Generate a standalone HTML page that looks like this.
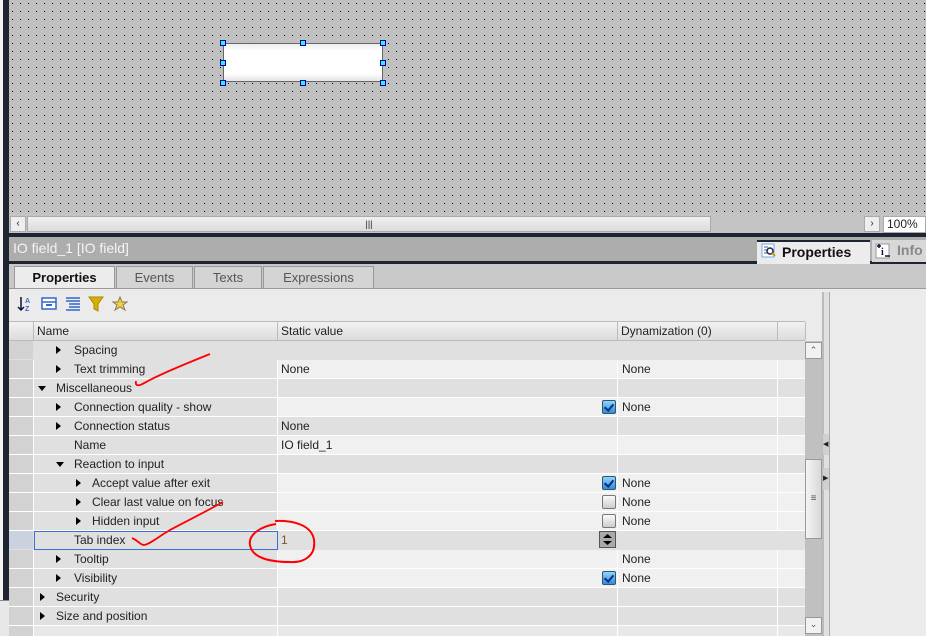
<!DOCTYPE html>
<html style="overflow:hidden;width:926px;height:636px"><head><style>
*{margin:0;padding:0;box-sizing:border-box}
body{width:926px;height:636px;overflow:hidden;position:relative;background:#c8c8c8;font-family:"Liberation Sans","DejaVu Sans",sans-serif;font-size:12px;color:#222}
.a{position:absolute}
.row{position:absolute;left:9px;width:796px;height:19px}
.row div{position:absolute;top:0;height:18px;line-height:18px}
.tri{position:absolute;width:0;height:0;border-top:4px solid transparent;border-bottom:4px solid transparent;border-left:5px solid #000;top:5px}
.trid{position:absolute;width:0;height:0;border-left:4px solid transparent;border-right:4px solid transparent;border-top:5px solid #000;top:7px}
.cb{position:absolute;left:593px;top:2px;width:14px;height:14px;border:1px solid #777;border-radius:2px;background:linear-gradient(#fafafa,#ccc)}
.cb.on{background:linear-gradient(#8fd4ff,#2a8ee0);border-color:#356}
.cb.on::after{content:"";position:absolute;left:3px;top:1px;width:4px;height:7px;border-right:2px solid #0a2a7a;border-bottom:2px solid #0a2a7a;transform:rotate(40deg)}
.tab{position:absolute;top:266px;height:22px;border:1px solid #999;border-bottom:none;background:#d4d4d4;color:#555;font-size:13px;text-align:center;line-height:21px}
</style></head><body>
<div class="a" style="left:0;top:0;width:3px;height:636px;background:#f4f4f4"></div>
<div class="a" style="left:3px;top:0;width:6px;height:600px;background:#1f2433"></div>
<svg class="a" style="left:9px;top:0" width="917" height="212"><defs><pattern id="d" x="3" y="3" width="8" height="8" patternUnits="userSpaceOnUse"><rect width="8" height="8" fill="#c0c0c0"/><rect x="0" y="0" width="1" height="1" fill="#000"/></pattern></defs><rect width="917" height="212" fill="url(#d)"/></svg>
<!-- selected IO field -->
<div class="a" style="left:223px;top:43px;width:160px;height:39px;border:1px solid #666;background:linear-gradient(#eee,#fff 20%,#fff 80%,#e4e4e4)"></div>
<div class="a" style="left:220px;top:40px;width:6px;height:6px;background:#3ee;border:1px solid #00a"></div>
<div class="a" style="left:300px;top:40px;width:6px;height:6px;background:#3ee;border:1px solid #00a"></div>
<div class="a" style="left:380px;top:40px;width:6px;height:6px;background:#3ee;border:1px solid #00a"></div>
<div class="a" style="left:220px;top:60px;width:6px;height:6px;background:#3ee;border:1px solid #00a"></div>
<div class="a" style="left:380px;top:60px;width:6px;height:6px;background:#3ee;border:1px solid #00a"></div>
<div class="a" style="left:220px;top:80px;width:6px;height:6px;background:#3ee;border:1px solid #00a"></div>
<div class="a" style="left:300px;top:80px;width:6px;height:6px;background:#3ee;border:1px solid #00a"></div>
<div class="a" style="left:380px;top:80px;width:6px;height:6px;background:#3ee;border:1px solid #00a"></div>
<!-- h scrollbar -->
<div class="a" style="left:9px;top:212px;width:917px;height:22px;background:#c4c4c4"></div>
<div class="a" style="left:10px;top:216px;width:16px;height:16px;border:1px solid #aaa;background:#eee;font-size:10px;line-height:14px;text-align:center">&#8249;</div>
<div class="a" style="left:27px;top:216px;width:684px;height:16px;border:1px solid #aaa;background:linear-gradient(#f0f0f0,#dcdcdc);text-align:center;font-size:9px;line-height:14px">|||</div>
<div class="a" style="left:864px;top:216px;width:16px;height:16px;border:1px solid #aaa;background:#eee;font-size:10px;line-height:14px;text-align:center">&#8250;</div>
<div class="a" style="left:883px;top:216px;width:43px;height:17px;border:1px solid #aaa;background:#fff;font-size:12px;line-height:15px;padding-left:3px">100%</div>
<div class="a" style="left:9px;top:233px;width:917px;height:4px;background:#1f2433"></div>
<!-- title bar -->
<div class="a" style="left:9px;top:237px;width:917px;height:24px;background:#adadad;color:#f4f4f4;font-size:14px;line-height:22px;padding-left:4px">IO field_1 [IO field]</div>
<div class="a" style="left:9px;top:261px;width:917px;height:3px;background:#1f2433"></div>
<div class="a" style="left:757px;top:240px;width:113px;height:24px;background:#ececec;border-top:2px solid #1f2433;font-size:14px;font-weight:bold;line-height:20px;padding-left:25px;color:#111">Properties</div>
<svg class="a" style="left:760px;top:242px" width="18" height="18"><rect x="2" y="2" width="12" height="13" fill="#fff" stroke="#7ad"/><path d="M4 5h4M4 8h3M4 11h3" stroke="#36a"/><circle cx="10" cy="9" r="3" fill="#fff" stroke="#225" stroke-width="1.5"/><path d="M12 11l3 3" stroke="#c90" stroke-width="2"/></svg>
<div class="a" style="left:872px;top:240px;width:54px;height:22px;background:#d8d8d8;font-size:14px;font-weight:bold;line-height:20px;padding-left:25px;color:#888">Info</div>
<svg class="a" style="left:874px;top:242px" width="18" height="18"><rect x="2" y="2" width="13" height="14" fill="#fff" stroke="#999"/><path d="M3 4h4M5 2v4" stroke="#113" stroke-width="1.5"/><text x="7" y="13" font-size="10" font-weight="bold" fill="#113" font-family="Liberation Serif">i</text><path d="M11 14h5" stroke="#113" stroke-width="1.5"/></svg>
<!-- tabs -->
<div class="tab" style="left:14px;width:101px;background:#ececec;color:#111;font-weight:bold;height:23px">Properties</div>
<div class="tab" style="left:116px;width:77px">Events</div>
<div class="tab" style="left:194px;width:68px">Texts</div>
<div class="tab" style="left:263px;width:111px">Expressions</div>
<div class="a" style="left:9px;top:288px;width:917px;height:348px;background:#ebebeb;border-top:1px solid #999"></div>
<!-- toolbar icons -->
<svg class="a" style="left:17px;top:295px" width="120" height="18">
<path d="M4 2v13M1 12l3 3 3-3" stroke="#113" stroke-width="1.5" fill="none"/><text x="8" y="8" font-size="7" fill="#46c" font-weight="bold">A</text><text x="8" y="16" font-size="7" fill="#46c" font-weight="bold">Z</text>
<rect x="25" y="3" width="14" height="11" fill="#fff" stroke="#36c" stroke-width="1.5"/><path d="M25 7h14" stroke="#36c" stroke-width="1.5"/><rect x="29" y="9" width="6" height="2" fill="#36c"/>
<path d="M49 3h14M49 6h14M52 9h11M52 12h11M49 15h14" stroke="#36c" stroke-width="1.6"/>
<path d="M72 2h14l-5 7v7l-4-2v-5z" fill="#d9b000" stroke="#a80"/>
<path d="M103 2l2 5h5l-4 3 2 5-5-3-5 3 2-5-4-3h5z" fill="#f0d040" stroke="#875"/>
</svg>
<!-- table header -->
<div class="a" style="left:9px;top:321px;width:796px;height:20px;background:linear-gradient(#f2f2f2,#dcdcdc);border-top:1px solid #bbb;border-bottom:1px solid #bbb"></div>
<div class="a" style="left:33px;top:322px;width:244px;height:18px;border-left:1px solid #bbb;line-height:18px;padding-left:3px">Name</div>
<div class="a" style="left:277px;top:322px;width:340px;height:18px;border-left:1px solid #bbb;line-height:18px;padding-left:3px">Static value</div>
<div class="a" style="left:617px;top:322px;width:160px;height:18px;border-left:1px solid #bbb;line-height:18px;padding-left:3px">Dynamization (0)</div>
<div class="a" style="left:777px;top:322px;width:28px;height:18px;border-left:1px solid #bbb"></div>
<div class="a" style="left:805px;top:322px;width:17px;height:18px;border-left:1px solid #bbb"></div>
<!-- rows -->
<div class="a" style="left:9px;top:341px;width:796px;height:295px;background:#fff"></div>
<div class="row" style="top:341px;background:#e0e0e0"><div style="left:0;width:24px;background:#d2d2d2"></div><div style="left:25px;width:243px;background:#e0e0e0"><span class="tri" style="left:22px"></span><span style="position:absolute;left:40px">Spacing</span></div><div style="left:269px;width:339px;background:#e0e0e0"></div><div style="left:609px;width:159px;background:#e0e0e0"></div><div style="left:769px;width:27px;background:#e0e0e0"></div></div>
<div class="row" style="top:360px"><div style="left:0;width:24px;background:#d2d2d2"></div><div style="left:25px;width:243px;background:#e0e0e0"><span class="tri" style="left:22px"></span><span style="position:absolute;left:40px">Text trimming</span></div><div style="left:269px;width:339px;background:#f0f0f0;padding-left:3px">None</div><div style="left:609px;width:159px;background:#f0f0f0;padding-left:4px">None</div><div style="left:769px;width:27px;background:#f0f0f0"></div></div>
<div class="row" style="top:379px"><div style="left:0;width:24px;background:#d2d2d2"></div><div style="left:25px;width:243px;background:#e0e0e0"><span class="trid" style="left:4px"></span><span style="position:absolute;left:22px">Miscellaneous</span></div><div style="left:269px;width:339px;background:#e0e0e0"></div><div style="left:609px;width:159px;background:#e0e0e0"></div><div style="left:769px;width:27px;background:#e0e0e0"></div></div>
<div class="row" style="top:398px"><div style="left:0;width:24px;background:#d2d2d2"></div><div style="left:25px;width:243px;background:#e0e0e0"><span class="tri" style="left:22px"></span><span style="position:absolute;left:40px">Connection quality - show</span></div><div style="left:269px;width:339px;background:#f0f0f0"><span class="cb on" style="left:324px"></span></div><div style="left:609px;width:159px;background:#f0f0f0;padding-left:4px">None</div><div style="left:769px;width:27px;background:#f0f0f0"></div></div>
<div class="row" style="top:417px"><div style="left:0;width:24px;background:#d2d2d2"></div><div style="left:25px;width:243px;background:#e0e0e0"><span class="tri" style="left:22px"></span><span style="position:absolute;left:40px">Connection status</span></div><div style="left:269px;width:339px;background:#e0e0e0;padding-left:3px">None</div><div style="left:609px;width:159px;background:#e0e0e0"></div><div style="left:769px;width:27px;background:#e0e0e0"></div></div>
<div class="row" style="top:436px"><div style="left:0;width:24px;background:#d2d2d2"></div><div style="left:25px;width:243px;background:#e0e0e0"><span style="position:absolute;left:40px">Name</span></div><div style="left:269px;width:339px;background:#f0f0f0;padding-left:3px">IO field_1</div><div style="left:609px;width:159px;background:#f0f0f0"></div><div style="left:769px;width:27px;background:#f0f0f0"></div></div>
<div class="row" style="top:455px"><div style="left:0;width:24px;background:#d2d2d2"></div><div style="left:25px;width:243px;background:#e0e0e0"><span class="trid" style="left:22px"></span><span style="position:absolute;left:40px">Reaction to input</span></div><div style="left:269px;width:339px;background:#e0e0e0"></div><div style="left:609px;width:159px;background:#e0e0e0"></div><div style="left:769px;width:27px;background:#e0e0e0"></div></div>
<div class="row" style="top:474px"><div style="left:0;width:24px;background:#d2d2d2"></div><div style="left:25px;width:243px;background:#e0e0e0"><span class="tri" style="left:42px"></span><span style="position:absolute;left:58px">Accept value after exit</span></div><div style="left:269px;width:339px;background:#f0f0f0"><span class="cb on" style="left:324px"></span></div><div style="left:609px;width:159px;background:#f0f0f0;padding-left:4px">None</div><div style="left:769px;width:27px;background:#f0f0f0"></div></div>
<div class="row" style="top:493px"><div style="left:0;width:24px;background:#d2d2d2"></div><div style="left:25px;width:243px;background:#e0e0e0"><span class="tri" style="left:42px"></span><span style="position:absolute;left:58px">Clear last value on focus</span></div><div style="left:269px;width:339px;background:#f0f0f0"><span class="cb" style="left:324px"></span></div><div style="left:609px;width:159px;background:#f0f0f0;padding-left:4px">None</div><div style="left:769px;width:27px;background:#f0f0f0"></div></div>
<div class="row" style="top:512px"><div style="left:0;width:24px;background:#d2d2d2"></div><div style="left:25px;width:243px;background:#e0e0e0"><span class="tri" style="left:42px"></span><span style="position:absolute;left:58px">Hidden input</span></div><div style="left:269px;width:339px;background:#f0f0f0"><span class="cb" style="left:324px"></span></div><div style="left:609px;width:159px;background:#f0f0f0;padding-left:4px">None</div><div style="left:769px;width:27px;background:#f0f0f0"></div></div>
<div class="row" style="top:531px;background:#e0e0e0"><div style="left:0;width:24px;background:#c9d2de"></div><div style="left:25px;width:244px;background:#e0e0e0;border:1px solid #3a6fd8;height:19px"><span style="position:absolute;left:39px;top:-1px">Tab index</span></div><div style="left:269px;width:339px;background:#e0e0e0;padding-left:3px;color:#753">1</div><div style="left:609px;width:159px;background:#e0e0e0"></div><div style="left:769px;width:27px;background:#e0e0e0"></div></div>
<svg class="a" style="left:599px;top:531px" width="17" height="17"><rect x="0.5" y="0.5" width="16" height="16" fill="#aaa" stroke="#555"/><path d="M4 7l4.5-4 4.5 4zM4 10l4.5 4 4.5-4z" fill="#000"/></svg>
<div class="row" style="top:550px"><div style="left:0;width:24px;background:#d2d2d2"></div><div style="left:25px;width:243px;background:#e0e0e0"><span class="tri" style="left:22px"></span><span style="position:absolute;left:40px">Tooltip</span></div><div style="left:269px;width:339px;background:#f0f0f0"></div><div style="left:609px;width:159px;background:#f0f0f0;padding-left:4px">None</div><div style="left:769px;width:27px;background:#f0f0f0"></div></div>
<div class="row" style="top:569px"><div style="left:0;width:24px;background:#d2d2d2"></div><div style="left:25px;width:243px;background:#e0e0e0"><span class="tri" style="left:22px"></span><span style="position:absolute;left:40px">Visibility</span></div><div style="left:269px;width:339px;background:#f0f0f0"><span class="cb on" style="left:324px"></span></div><div style="left:609px;width:159px;background:#f0f0f0;padding-left:4px">None</div><div style="left:769px;width:27px;background:#f0f0f0"></div></div>
<div class="row" style="top:588px"><div style="left:0;width:24px;background:#d2d2d2"></div><div style="left:25px;width:243px;background:#e0e0e0"><span class="tri" style="left:6px"></span><span style="position:absolute;left:22px">Security</span></div><div style="left:269px;width:339px;background:#e0e0e0"></div><div style="left:609px;width:159px;background:#e0e0e0"></div><div style="left:769px;width:27px;background:#e0e0e0"></div></div>
<div class="row" style="top:607px"><div style="left:0;width:24px;background:#d2d2d2"></div><div style="left:25px;width:243px;background:#e0e0e0"><span class="tri" style="left:6px"></span><span style="position:absolute;left:22px">Size and position</span></div><div style="left:269px;width:339px;background:#e0e0e0"></div><div style="left:609px;width:159px;background:#e0e0e0"></div><div style="left:769px;width:27px;background:#e0e0e0"></div></div>
<div class="row" style="top:626px;height:10px"><div style="left:0;width:24px;background:#d2d2d2"></div><div style="left:25px;width:243px;background:#e8e8e8"></div><div style="left:269px;width:339px;background:#e8e8e8"></div><div style="left:609px;width:159px;background:#e8e8e8"></div><div style="left:769px;width:27px;background:#e8e8e8"></div></div>
<div class="a" style="left:0;top:600px;width:9px;height:36px;background:#e8e8e8;border-top:1px solid #888"></div>
<!-- v scrollbar -->
<div class="a" style="left:805px;top:341px;width:18px;height:295px;background:#c0c0c0"></div>
<div class="a" style="left:805px;top:342px;width:17px;height:17px;border:1px solid #999;background:#f2f2f2;text-align:center;font-size:9px;line-height:15px;color:#555">&#8963;</div>
<div class="a" style="left:805px;top:459px;width:17px;height:80px;border:1px solid #999;background:linear-gradient(90deg,#f4f4f4,#d8d8d8);text-align:center;font-size:10px;line-height:78px;color:#555">&#8801;</div>
<div class="a" style="left:805px;top:617px;width:17px;height:17px;border:1px solid #999;background:#f2f2f2;text-align:center;font-size:9px;line-height:13px;color:#555">&#8964;</div>
<div class="a" style="left:822px;top:292px;width:2px;height:344px;background:#bbb"></div>
<div class="a" style="left:824px;top:292px;width:6px;height:344px;background:#e0e0e0;border-right:1px solid #aaa"></div>
<div class="a" style="left:823px;top:434px;width:6px;height:21px;background:#d0d0d0;font-size:7px;line-height:21px">&#9664;</div>
<div class="a" style="left:823px;top:468px;width:6px;height:22px;background:#d0d0d0;font-size:7px;line-height:22px">&#9654;</div>
<!-- red annotations -->
<svg class="a" style="left:0;top:0" width="926" height="636">
<path d="M210 354 C190 362 165 372 150 380 C142 384 140 386 137 385 C135 384 136 382 136 381" stroke="#f00" stroke-width="1.8" fill="none"/>
<path d="M223 502 C205 512 185 522 170 530 C158 537 150 544 144 545 C140 545 139 541 132 538" stroke="#f00" stroke-width="1.8" fill="none"/>
<path d="M275 521 C295 520 312 526 314 540 C316 555 305 563 290 562 C270 562 252 558 250 545 C248 534 262 526 276 524" stroke="#f00" stroke-width="2" fill="none"/>
</svg>
</body></html>
